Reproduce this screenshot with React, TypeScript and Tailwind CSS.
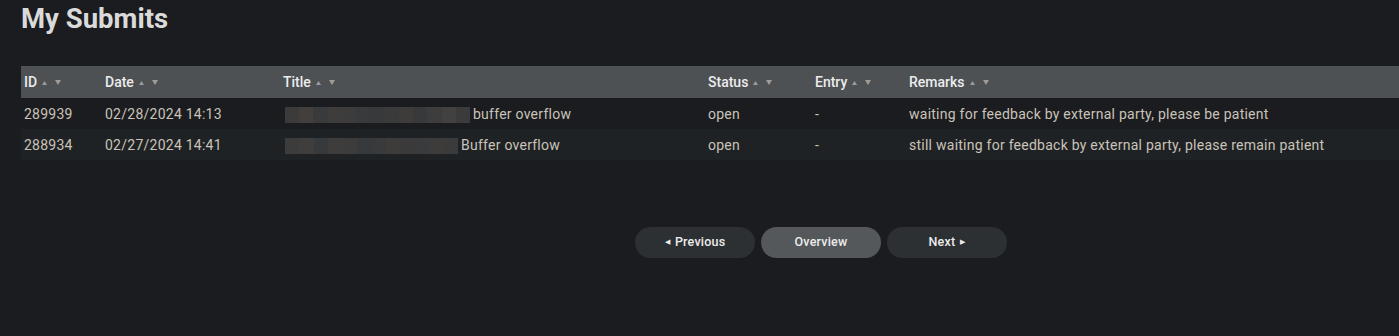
import { useState } from "react";

type Row = {
  id: string;
  date: string;
  blur: string[];
  blurW: string;
  title: string;
  status: string;
  entry: string;
  remarks: string;
};

const rows: Row[] = [
  {
    id: "289939",
    date: "02/28/2024 14:13",
    blur: ["#3b3b3b", "#423f3c", "#383a3b", "#3f3d3b", "#3c3c3c", "#393a3b", "#37393a", "#3a3a3a", "#3e3c3b", "#38393a", "#3d3d3d", "#424140", "#3c3b3b"],
    blurW: "w-[185px]",
    title: "buffer overflow",
    status: "open",
    entry: "-",
    remarks: "waiting for feedback by external party, please be patient",
  },
  {
    id: "288934",
    date: "02/27/2024 14:41",
    blur: ["#3c3c3c", "#403e3c", "#373a3c", "#3f3d3c", "#3c3c3c", "#363a3c", "#393a3b", "#3d3c3b", "#3a3a3a", "#393b3c", "#3e3c3a", "#3b3b3b"],
    blurW: "w-[173px]",
    title: "Buffer overflow",
    status: "open",
    entry: "-",
    remarks: "still waiting for feedback by external party, please remain patient",
  },
];

const columns = [
  { label: "ID", w: "w-[81px]" },
  { label: "Date", w: "w-[178px]" },
  { label: "Title", w: "w-[425px]" },
  { label: "Status", w: "w-[107px]" },
  { label: "Entry", w: "w-[94px]" },
  { label: "Remarks", w: "" },
];

function SortArrows() {
  return (
    <span className="ml-[5px] inline-flex items-center gap-[8px] align-middle">
      <svg width="5" height="4" viewBox="0 0 5 4">
        <path d="M2.5 0 L5 4 L0 4 Z" fill="#9a9c9e" />
      </svg>
      <svg width="6" height="5" viewBox="0 0 6 5">
        <path d="M0 0 L6 0 L3 5 Z" fill="#a19d96" />
      </svg>
    </span>
  );
}

function Blur(props: { colors: string[]; w: string }) {
  return (
    <span className={`mr-[3px] flex h-[16px] ${props.w}`}>
      {props.colors.map((c, i) => (
        <span key={i} className="h-full flex-1" style={{ backgroundColor: c }} />
      ))}
    </span>
  );
}

export default function App() {
  const [page] = useState(1);

  return (
    <div className="min-h-[336px] w-full bg-[#1b1c1f] font-['Roboto',sans-serif] overflow-hidden">
      <h1 className="pl-[21px] pt-[1px] text-[27.5px] font-bold leading-[36px] text-[#dadada]">My Submits</h1>

      <div className="mt-[29px] pl-[21px]">
        <table className="w-full border-collapse text-[14px]">
          <thead>
            <tr className="h-[32px] bg-[#4d5154]">
              {columns.map((c) => (
                <th key={c.label} className={`${c.w} pl-[3px] text-left font-medium text-[#ececec]`}>
                  {c.label}
                  <SortArrows />
                </th>
              ))}
            </tr>
          </thead>
          <tbody className="text-[#c9c3b9] tracking-[0.25px]">
            {rows.map((r, i) => (
              <tr key={r.id} className={i % 2 === 0 ? "h-[31px] bg-[#1b1c1f]" : "h-[31px] bg-[#1f2224]"}>
                <td className="pl-[3px] pt-[2px]">{r.id}</td>
                <td className="pl-[3px] pt-[2px]">{r.date}</td>
                <td className="pl-[5px] pt-[2px]">
                  <span className="flex items-center">
                    <Blur colors={r.blur} w={r.blurW} />
                    <span>{r.title}</span>
                  </span>
                </td>
                <td className="pl-[3px] pt-[2px]">{r.status}</td>
                <td className="pl-[3px] pt-[2px]">{r.entry}</td>
                <td className="pl-[3px] pt-[2px]">{r.remarks}</td>
              </tr>
            ))}
          </tbody>
        </table>
      </div>

      <div className="mt-[67px] flex gap-[6px] pl-[635px] text-[12.5px] font-medium tracking-[0.2px] text-[#ececec]" data-page={page}>
        <button className="flex h-[31px] w-[120px] items-center justify-center gap-[5px] rounded-full bg-[#2d3033]">
          <span className="text-[7px]">◀</span>
          Previous
        </button>
        <button className="flex h-[31px] w-[120px] items-center justify-center rounded-full bg-[#54585b]">
          Overview
        </button>
        <button className="flex h-[31px] w-[120px] items-center justify-center gap-[5px] rounded-full bg-[#2d3033]">
          Next
          <span className="text-[7px]">▶</span>
        </button>
      </div>
    </div>
  );
}
